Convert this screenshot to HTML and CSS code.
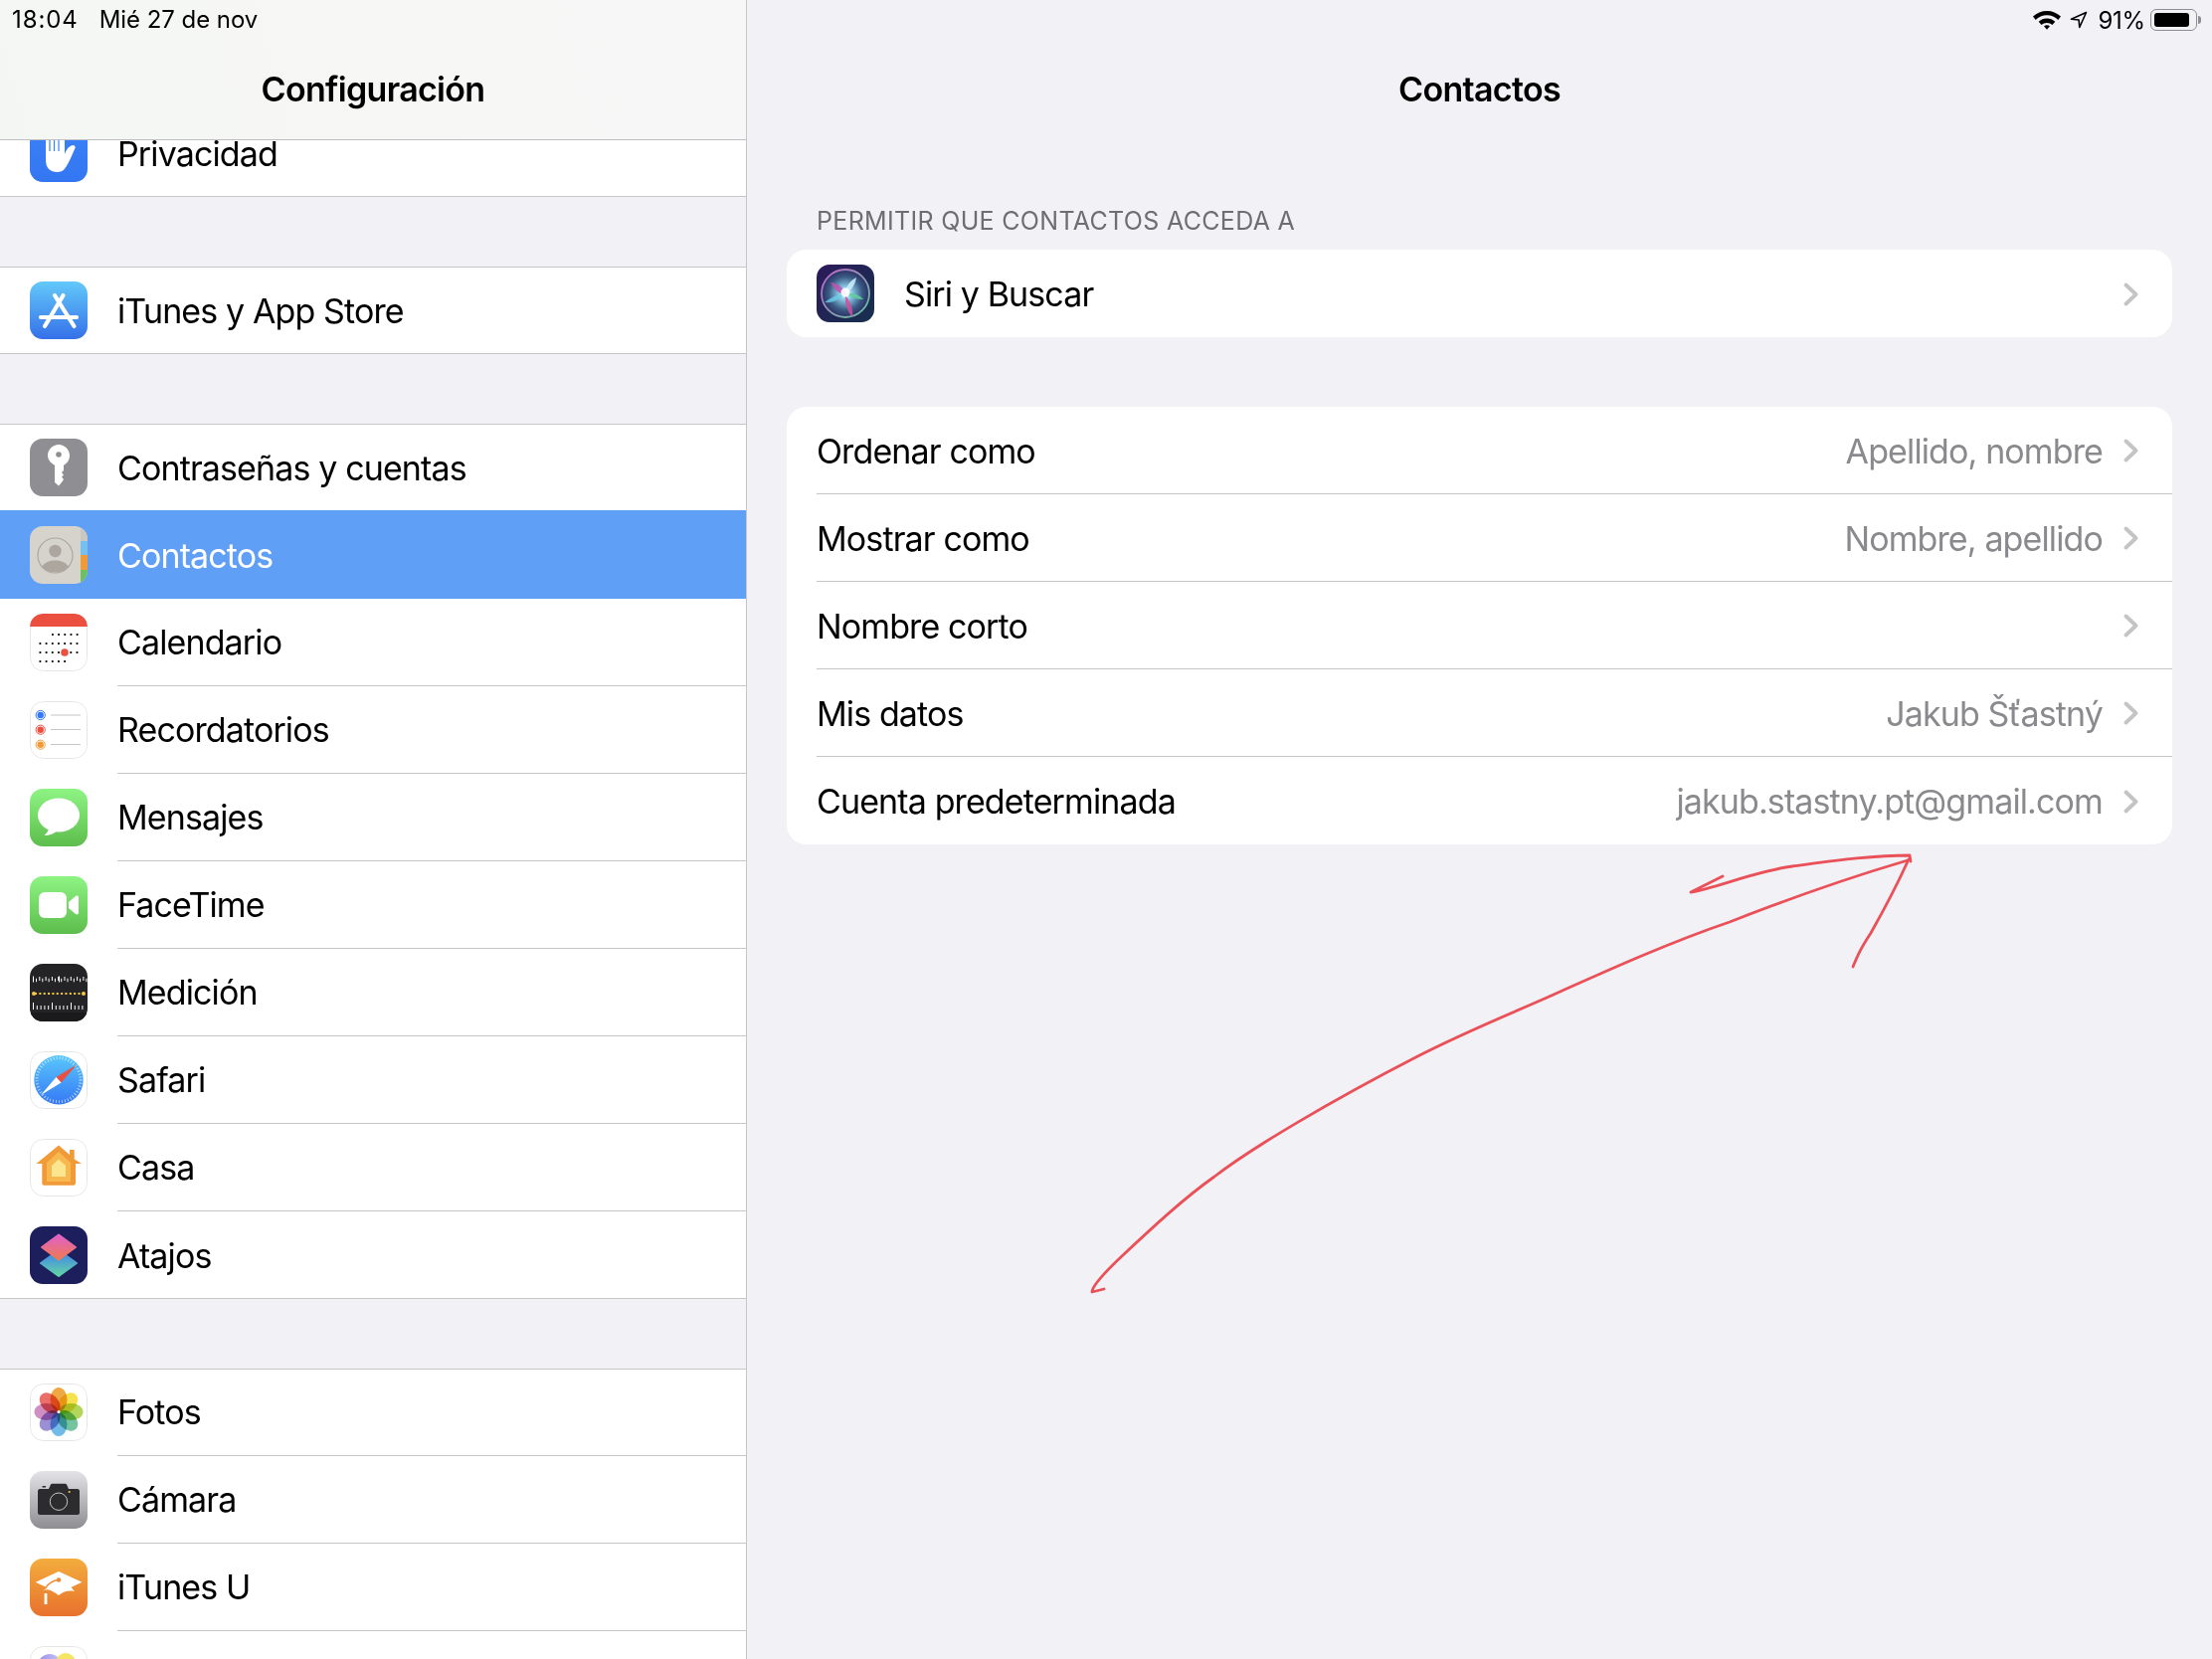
FILE: index.html
```html
<!DOCTYPE html>
<html lang="es">
<head>
<meta charset="utf-8">
<title>Configuración</title>
<link rel="stylesheet" href="styles.css">
</head>
<body>
<aside class="sidebar">
  <header class="side-head">
    <div class="status status-left"><span class="st-time">18:04</span><span>Mié 27 de nov</span></div>
    <h1 class="title">Configuración</h1>
  </header>
  <div class="list">
    <section class="group group-first">
      <div class="row">
        <svg class="ic" viewBox="0 0 58 58"><defs><linearGradient id="g-pr" x1="0" y1="0" x2="0" y2="1"><stop offset="0" stop-color="#3a82f7"/><stop offset="1" stop-color="#3476f2"/></linearGradient></defs><rect width="58" height="58" fill="url(#g-pr)"/><path d="M16 8h19v22c2-5 4-8 8-9 2 0 3 1 2.500 3-3 6-6 15-10 20-2 3-5 4-8 4-7 0-11.500-4-11.500-12z" fill="#fff"/><path d="M20 0v27M24.500 0v27M29 0v27" stroke="#3a82f7" stroke-width="1.200"/></svg>
        <div class="label">Privacidad</div>
      </div>
    </section>
    <section class="group">
      <div class="row">
        <svg class="ic" viewBox="0 0 58 58"><defs><linearGradient id="g-as" x1="0" y1="0" x2="0" y2="1"><stop offset="0" stop-color="#63c9f9"/><stop offset="1" stop-color="#3570e9"/></linearGradient></defs><rect width="58" height="58" fill="url(#g-as)"/><g stroke="#fff" stroke-width="4.200" stroke-linecap="round" fill="none"><path d="M25 14l19.500 31"/><path d="M33.500 14 15 45"/><path d="M11 36h36"/></g></svg>
        <div class="label">iTunes y App Store</div>
      </div>
    </section>
    <section class="group">
      <div class="row">
        <svg class="ic" viewBox="0 0 58 58"><rect width="58" height="58" fill="#8e8e93"/><path d="M29 6c6 0 11 5 11 11 0 4.500-2.500 8-6 9.700v5.300l-2 2 2 2.500-2 2 2 2.500-2 3-3 3.500-4-3.500V26.700c-3.500-1.700-7-5.200-7-9.700 0-6 5-11 11-11z" fill="#fff"/><circle cx="29" cy="16" r="2.800" fill="#8e8e93"/></svg>
        <div class="label">Contraseñas y cuentas</div>
      </div>
      <div class="row row-active">
        <svg class="ic" viewBox="0 0 58 58"><rect width="58" height="58" fill="#d5d3cb"/><rect x="51" width="7" height="15" fill="#c9c7bf"/><rect x="51" y="15" width="7" height="14" fill="#74c1f1"/><rect x="51" y="29" width="7" height="15" fill="#f09a38"/><rect x="51" y="44" width="7" height="14" fill="#6cc161"/><circle cx="25.500" cy="29.500" r="17.500" fill="none" stroke="#aca69e" stroke-width="1.200"/><circle cx="25.500" cy="25" r="6.200" fill="#aca69e"/><path d="M12 41c3-5 8-6.500 13.500-6.500S36 36 39 41c-3 3.500-8 5.300-13.500 5.300S15 44.500 12 41z" fill="#aca69e"/></svg>
        <div class="label">Contactos</div>
      </div>
      <div class="row">
        <svg class="ic" viewBox="0 0 58 58"><rect x=".5" y=".5" width="57" height="57" rx="13" fill="#fff" stroke="#e6e6e6"/><path d="M0 13V13a13 13 0 0 1 13-13h32a13 13 0 0 1 13 13z" fill="#ea4f40"/><g stroke="#111" stroke-width="1.800" stroke-dasharray="1.800 4.380" fill="none"><path d="M22 21h27"/><path d="M9.500 30h39"/><path d="M9.500 39h39"/><path d="M9.500 48h27"/></g><circle cx="35" cy="39" r="3.800" fill="#ea4f40"/></svg>
        <div class="label">Calendario</div>
      </div>
      <div class="row">
        <svg class="ic" viewBox="0 0 58 58"><rect x=".5" y=".5" width="57" height="57" rx="13" fill="#fff" stroke="#e6e6e6"/><g fill="none" stroke-width="1"><circle cx="10.700" cy="14" r="4.600" stroke="#3478f6"/><circle cx="10.700" cy="28.700" r="4.600" stroke="#ea4f40"/><circle cx="10.700" cy="43.700" r="4.600" stroke="#f09a38"/></g><circle cx="10.700" cy="14" r="3.200" fill="#3478f6"/><circle cx="10.700" cy="28.700" r="3.200" fill="#ea4f40"/><circle cx="10.700" cy="43.700" r="3.200" fill="#f09a38"/><path d="M21 14h30M21 28.500h30M21 43.500h30" stroke="#c6c6c8" stroke-width="1"/></svg>
        <div class="label">Recordatorios</div>
      </div>
      <div class="row">
        <svg class="ic" viewBox="0 0 58 58"><defs><linearGradient id="g-ms" x1="0" y1="0" x2="0" y2="1"><stop offset="0" stop-color="#8df483"/><stop offset="1" stop-color="#5dbd4c"/></linearGradient></defs><rect width="58" height="58" fill="url(#g-ms)"/><ellipse cx="29" cy="26.500" rx="21" ry="17" fill="#fff"/><path d="M20 38c-1 4-3 7-5.500 9 5 0 9-1.500 12-4z" fill="#fff"/></svg>
        <div class="label">Mensajes</div>
      </div>
      <div class="row">
        <svg class="ic" viewBox="0 0 58 58"><defs><linearGradient id="g-ft" x1="0" y1="0" x2="0" y2="1"><stop offset="0" stop-color="#8df483"/><stop offset="1" stop-color="#5dbd4c"/></linearGradient></defs><rect width="58" height="58" fill="url(#g-ft)"/><rect x="9" y="16" width="28" height="26" rx="6" fill="#fff"/><path d="M39 26l7-6c1.500-1 3-.5 3 1.500v15c0 2-1.500 2.500-3 1.500l-7-6z" fill="#fff"/></svg>
        <div class="label">FaceTime</div>
      </div>
      <div class="row">
        <svg class="ic" viewBox="0 0 58 58"><rect width="58" height="58" fill="#242426"/><rect y="49" width="58" height="9" fill="#1a1a1c"/><path d="M3 15h52" stroke="#fff" stroke-width="4" stroke-dasharray="1 5.300" fill="none"/><path d="M3 15.500h52" stroke="#fff" stroke-width="6" stroke-dasharray="1 25" fill="none"/><path d="M6 16.500h52" stroke="#fff" stroke-width="3.500" stroke-dasharray="1 5.300" fill="none"/><path d="M3 44h52" stroke="#fff" stroke-width="4" stroke-dasharray="1 2.800" fill="none"/><path d="M3 42.500h52" stroke="#fff" stroke-width="7" stroke-dasharray="1 18" fill="none"/><path d="M5 30h48" stroke="#f6c944" stroke-width="2.200" stroke-dasharray="2 2.350" fill="none"/><circle cx="4" cy="30" r="2" fill="#f6c944"/><circle cx="54" cy="30" r="2" fill="#f6c944"/></svg>
        <div class="label">Medición</div>
      </div>
      <div class="row">
        <svg class="ic" viewBox="0 0 58 58"><defs><linearGradient id="g-sf" x1="0" y1="0" x2="0" y2="1"><stop offset="0" stop-color="#5ac8fa"/><stop offset="1" stop-color="#3478f6"/></linearGradient></defs><rect x=".5" y=".5" width="57" height="57" rx="13" fill="#fff" stroke="#e6e6e6"/><circle cx="29" cy="28.700" r="24.700" fill="url(#g-sf)"/><circle cx="29" cy="28.700" r="22" fill="none" stroke="#fff" stroke-opacity=".75" stroke-width="3" stroke-dasharray=".8 2.250"/><path d="M47 13.500 26.500 26l5 5.500z" fill="#ea4f40"/><path d="M11 44l15.500-18 5 5.500z" fill="#fff"/></svg>
        <div class="label">Safari</div>
      </div>
      <div class="row">
        <svg class="ic" viewBox="0 0 58 58"><rect x=".5" y=".5" width="57" height="57" rx="13" fill="#fff" stroke="#e6e6e6"/><path d="M29 6.500 40 16v-5h4.700v9.500L52 25H46v19.500c0 1.300-.8 2.200-2 2.200H14.300c-1.200 0-2-.9-2-2.200V25H6.500z" fill="#f09a38"/><path d="M29 13 41 24v19H17V24z" fill="#f7b84f"/><path d="M29 20.500 36 27v11H22V27z" fill="#fbe58e"/></svg>
        <div class="label">Casa</div>
      </div>
      <div class="row">
        <svg class="ic" viewBox="0 0 58 58"><defs><linearGradient id="g-sa" x1="0" y1="0" x2="0" y2="1"><stop offset="0" stop-color="#e060cc"/><stop offset="1" stop-color="#ee7a4e"/></linearGradient><linearGradient id="g-sb" x1="0" y1="0" x2="0" y2="1"><stop offset="0" stop-color="#3f7cf0"/><stop offset="1" stop-color="#62d6a4"/></linearGradient></defs><rect width="58" height="58" fill="#1c1f5c"/><path d="M11 37 29 50 47 37 29 24z" fill="url(#g-sb)" stroke="url(#g-sb)" stroke-width="2" stroke-linejoin="round"/><path d="M12 21 29 8.500 46 21 29 33.500z" fill="url(#g-sa)" stroke="url(#g-sa)" stroke-width="2" stroke-linejoin="round"/></svg>
        <div class="label">Atajos</div>
      </div>
    </section>
    <section class="group">
      <div class="row">
        <svg class="ic" viewBox="0 0 58 58"><rect x=".5" y=".5" width="57" height="57" rx="13" fill="#fff" stroke="#e6e6e6"/><g class="petals"><ellipse cx="29" cy="16" rx="8.500" ry="12" fill="#f0a843"/><ellipse cx="29" cy="16" rx="8.500" ry="12" fill="#f5e24e" transform="rotate(45 29 28.500)"/><ellipse cx="29" cy="16" rx="8.500" ry="12" fill="#b2d65a" transform="rotate(90 29 28.500)"/><ellipse cx="29" cy="16" rx="8.500" ry="12" fill="#74c4a0" transform="rotate(135 29 28.500)"/><ellipse cx="29" cy="16" rx="8.500" ry="12" fill="#72bbe8" transform="rotate(180 29 28.500)"/><ellipse cx="29" cy="16" rx="8.500" ry="12" fill="#9c8fd4" transform="rotate(225 29 28.500)"/><ellipse cx="29" cy="16" rx="8.500" ry="12" fill="#d08fc2" transform="rotate(270 29 28.500)"/><ellipse cx="29" cy="16" rx="8.500" ry="12" fill="#ea6f6a" transform="rotate(315 29 28.500)"/></g><circle cx="29" cy="28.500" r="1.500" fill="#fff"/></svg>
        <div class="label">Fotos</div>
      </div>
      <div class="row">
        <svg class="ic" viewBox="0 0 58 58"><defs><linearGradient id="g-cm" x1="0" y1="0" x2="0" y2="1"><stop offset="0" stop-color="#e4e4e7"/><stop offset="1" stop-color="#8d8d92"/></linearGradient></defs><rect width="58" height="58" fill="url(#g-cm)"/><path d="M10 18h9l2-4.500c.3-.5.700-.7 1.300-.7h13.400c.6 0 1 .2 1.300.7l2 4.500h9c1 0 2 1 2 2v22c0 1-1 2-2 2H10c-1 0-2-1-2-2V20c0-1 1-2 2-2z" fill="#2c2c2e"/><rect x="12.500" y="15" width="3.500" height="1.500" fill="#2c2c2e"/><circle cx="29" cy="30.700" r="8.700" fill="none" stroke="#c4c4c6" stroke-width="1"/><circle cx="39.700" cy="21" r="1.100" fill="#f6c944"/></svg>
        <div class="label">Cámara</div>
      </div>
      <div class="row">
        <svg class="ic" viewBox="0 0 58 58"><defs><linearGradient id="g-iu" x1="0" y1="0" x2="0" y2="1"><stop offset="0" stop-color="#f3ad3d"/><stop offset="1" stop-color="#e8712c"/></linearGradient></defs><rect width="58" height="58" fill="url(#g-iu)"/><path d="M29 13 52.500 23.700 29 34.700 5.700 23.700z" fill="#fff"/><path d="M13 32.500c5-3 10 0 16 4.500 4-3.500 9-5.500 16-4l-5-6-11 5-9-4.500z" fill="#fff"/><path d="M15.500 30c3-5 8-8 13.500-8.500" fill="none" stroke="#ee8a33" stroke-width="1.400"/><circle cx="29" cy="21.500" r="2.200" fill="#ee8a33"/><rect x="14.600" y="35" width="2.800" height="11" fill="#fff"/></svg>
        <div class="label">iTunes U</div>
      </div>
      <div class="row">
        <svg class="ic" viewBox="0 0 58 58"><defs><linearGradient id="g-gc" x1="0" y1="0" x2="1" y2="0"><stop offset="0" stop-color="#9b8cf0"/><stop offset="1" stop-color="#c8c8f4"/></linearGradient></defs><rect x=".5" y=".5" width="57" height="57" rx="13" fill="#fff" stroke="#e6e6e6"/><circle cx="20" cy="20" r="12" fill="url(#g-gc)"/><circle cx="36" cy="17" r="10" fill="#f5e04a" fill-opacity=".85"/><circle cx="20" cy="40" r="11" fill="#f08a8a"/><circle cx="38" cy="37" r="13" fill="#6fd27a"/></svg>
        <div class="label"></div>
      </div>
    </section>
  </div>
</aside>
<main class="detail">
  <header class="detail-head">
    <div class="status status-right">
      <svg class="st-wifi" viewBox="0 0 28 20"><path d="M14 1c5.500 0 10 2 14 5.600L25.300 10C22.300 7.100 18.500 5.300 14 5.300S5.700 7.100 2.700 10L0 6.600C4 3 8.500 1 14 1z" fill="#000"/><path d="M14 8.500c3.300 0 6 1.200 8.300 3.300l-2.800 3.100c-1.500-1.300-3.300-2-5.500-2s-4 .7-5.500 2l-2.800-3.100C8 9.700 10.700 8.500 14 8.500z" fill="#000"/><path d="M14 15.200c1.100 0 2.100.4 3 1.100L14 19.800l-3-3.500c.9-.7 1.900-1.100 3-1.100z" fill="#000"/></svg>
      <svg class="st-loc" viewBox="0 0 18 18"><path d="M16.500 1.500 1.500 8.300l7.600.7.700 7.500z" fill="none" stroke="#000" stroke-width="1.600" stroke-linejoin="round"/></svg>
      <span class="st-pct">91%</span>
      <span class="battery"><span class="battery-fill"></span></span>
      <span class="battery-nub"></span>
    </div>
    <h1 class="title">Contactos</h1>
  </header>
  <div class="detail-body">
    <div class="section-label">PERMITIR QUE CONTACTOS ACCEDA A</div>
    <section class="card">
      <div class="cell cell-siri">
        <svg class="ic" viewBox="0 0 58 58"><defs><linearGradient id="g-si" x1="0" y1="0" x2="1" y2="1"><stop offset="0" stop-color="#2c1a5a"/><stop offset="1" stop-color="#16304e"/></linearGradient><radialGradient id="g-so"><stop offset="0" stop-color="#fff"/><stop offset=".25" stop-color="#8fd0e8"/><stop offset=".7" stop-color="#3a5a84"/><stop offset="1" stop-color="#2a2f62"/></radialGradient><linearGradient id="g-sr" x1="0" y1="0" x2="1" y2="1"><stop offset="0" stop-color="#c061c8"/><stop offset="1" stop-color="#5fc8a0"/></linearGradient></defs><rect width="58" height="58" fill="url(#g-si)"/><circle cx="29" cy="29" r="24" fill="url(#g-so)" stroke="url(#g-sr)" stroke-width="1.800"/><path d="M14 18c8 1 14 6 17 13-8-1-14-6-17-13z" fill="#c24fb0" fill-opacity=".8"/><path d="M36 53c-5-6-8-14-7-22 5 6 8 14 7 22z" fill="#d04fa0" fill-opacity=".85"/><path d="M47 35c-7 0-13-2-18-6 7-1 14 1 18 6z" fill="#5fcf9c" fill-opacity=".85"/><path d="M40 13c-1 7-5 13-11 16 0-7 5-13 11-16z" fill="#d0f0ff" fill-opacity=".85"/><path d="M8 38c6-5 13-8 21-9-5 6-13 10-21 9z" fill="#6ad0e8" fill-opacity=".8"/><circle cx="29" cy="28" r="4.500" fill="#fff" fill-opacity=".9"/></svg>
        <div class="cell-text"><span class="cell-name">Siri y Buscar</span>
          <svg class="chev" viewBox="0 0 15 24"><path d="M2.500 2.500 12.500 12 2.500 21.500"/></svg>
        </div>
      </div>
    </section>
    <section class="card">
      <div class="cell">
        <div class="cell-text"><span class="cell-name">Ordenar como</span><span class="cell-value">Apellido, nombre</span>
          <svg class="chev" viewBox="0 0 15 24"><path d="M2.500 2.500 12.500 12 2.500 21.500"/></svg>
        </div>
      </div>
      <div class="cell">
        <div class="cell-text"><span class="cell-name">Mostrar como</span><span class="cell-value">Nombre, apellido</span>
          <svg class="chev" viewBox="0 0 15 24"><path d="M2.500 2.500 12.500 12 2.500 21.500"/></svg>
        </div>
      </div>
      <div class="cell">
        <div class="cell-text"><span class="cell-name">Nombre corto</span>
          <svg class="chev" viewBox="0 0 15 24"><path d="M2.500 2.500 12.500 12 2.500 21.500"/></svg>
        </div>
      </div>
      <div class="cell">
        <div class="cell-text"><span class="cell-name">Mis datos</span><span class="cell-value">Jakub Šťastný</span>
          <svg class="chev" viewBox="0 0 15 24"><path d="M2.500 2.500 12.500 12 2.500 21.500"/></svg>
        </div>
      </div>
      <div class="cell">
        <div class="cell-text"><span class="cell-name">Cuenta predeterminada</span><span class="cell-value">jakub.stastny.pt@gmail.com</span>
          <svg class="chev" viewBox="0 0 15 24"><path d="M2.500 2.500 12.500 12 2.500 21.500"/></svg>
        </div>
      </div>
    </section>
  </div>
</main>
<svg class="scribble" viewBox="0 0 2224 1668">
  <path d="M1110 1296 1098 1299C1098 1293 1112 1278 1129 1262C1160 1233 1190 1205 1221 1183C1260 1153 1340 1106 1423.500 1063C1470 1039 1510 1023 1557.500 1002C1620 974 1680 947 1739 927C1800 903 1850 885 1918 865"/>
  <path d="M1732 881 1700 897C1725 893 1765 876 1802 871C1840 866 1880 860 1920 860L1921 866"/>
  <path d="M1919 864C1905 895 1894 915 1881 938C1870 955 1868 960 1863 972"/>
</svg>
</body>
</html>
```

FILE: styles.css
```css
* { box-sizing: border-box; }
html, body { margin: 0; padding: 0; }
body {
  width: 2224px;
  height: 1668px;
  overflow: hidden;
  display: flex;
  position: relative;
  background: #f1f1f6;
  color: #000;
  font-family: Inter, "Liberation Sans", sans-serif;
  font-size: 34px;
  letter-spacing: -0.88px;
}
.sidebar {
  width: 751px;
  flex: none;
  display: flex;
  flex-direction: column;
  height: 1668px;
  border-right: 1px solid #c6c6c8;
}
.side-head {
  height: 141px;
  flex: none;
  background: linear-gradient(75deg, #f3f7f2 0%, #f6f7f5 35%, #f7f7f7 100%);
  border-bottom: 1px solid #bfbfc3;
  display: flex;
  flex-direction: column;
}
.status {
  height: 40px;
  flex: none;
  display: flex;
  align-items: center;
  font-size: 24px;
  letter-spacing: -0.05px;
}
.status-left { padding-left: 12px; gap: 21px; padding-bottom: 2px; }
.st-time { letter-spacing: 0.9px; }
.status-right { justify-content: flex-end; padding-right: 11px; }
.title {
  margin: 0;
  height: 100px;
  padding-bottom: 1px;
  display: flex;
  align-items: center;
  justify-content: center;
  font-size: 34px;
  font-weight: 600;
  letter-spacing: -0.7px;
}
.list {
  flex: 1;
  overflow: hidden;
  background: #f1f1f6;
}
.group {
  background: #fff;
  margin-top: 70px;
  box-shadow: inset 0 1px 0 #c6c6c8, inset 0 -1px 0 #c6c6c8;
}
.group-first { margin-top: -31px; }
.row {
  height: 88px;
  display: flex;
  align-items: center;
  gap: 30px;
  padding-left: 30px;
}
.ic {
  width: 58px;
  height: 58px;
  flex: none;
  display: block;
  border-radius: 13px;
}
.label {
  flex: 1;
  align-self: stretch;
  display: flex;
  align-items: center;
  border-bottom: 1px solid #c6c6c8;
}
.row:last-child .label { border-bottom: 0; }
.row:has(+ .row-active) .label { border-bottom: 0; }
.row-active {
  background: #609ff6;
  box-shadow: 0 -1px 0 #609ff6;
  color: #fff;
}
.row-active .label { border-bottom: 0; }
.petals { isolation: isolate; }
.petals ellipse { mix-blend-mode: multiply; }

.detail {
  flex: 1;
  display: flex;
  flex-direction: column;
  min-width: 0;
}
.detail-head {
  height: 140px;
  flex: none;
  display: flex;
  flex-direction: column;
}
.st-wifi { width: 28px; height: 20px; margin-right: 9px; }
.st-loc { width: 18px; height: 18px; margin-right: 10px; }
.st-pct { margin-right: 5px; letter-spacing: -0.2px; }
.battery {
  width: 47px;
  height: 22px;
  padding: 3px;
  border: 1.500px solid #8e8e93;
  border-radius: 6px;
  display: block;
}
.battery-fill {
  display: block;
  width: 91%;
  height: 100%;
  background: #000;
  border-radius: 3px;
}
.battery-nub {
  width: 3px;
  height: 8px;
  margin-left: 1px;
  background: #8e8e93;
  border-radius: 0 3px 3px 0;
}
.detail-body {
  padding: 0 40px;
  flex: 1;
}
.section-label {
  height: 111px;
  display: flex;
  align-items: flex-end;
  padding: 0 0 14px 30px;
  font-size: 25px;
  letter-spacing: 0.32px;
  color: #6d6d72;
}
.card {
  background: #fff;
  border-radius: 20px;
  margin-bottom: 70px;
}
.cell {
  height: 88px;
  display: flex;
  align-items: center;
  padding-left: 30px;
}
.cell-siri { gap: 30px; }
.cell-text {
  flex: 1;
  min-width: 0;
  align-self: stretch;
  display: flex;
  align-items: center;
  padding-right: 34px;
  padding-top: 1px;
  border-bottom: 1px solid #c6c6c8;
}
.cell:last-child .cell-text { border-bottom: 0; }
.cell-name { flex: 1; }
.cell-value { color: #8a8a8e; margin-right: 21px; }
.chev {
  width: 15px;
  height: 24px;
  flex: none;
  fill: none;
  stroke: #c4c4c7;
  stroke-width: 3.800;
  stroke-linecap: round;
  stroke-linejoin: round;
}
.scribble {
  position: absolute;
  left: 0;
  top: 0;
  width: 2224px;
  height: 1668px;
  fill: none;
  stroke: #ea5058;
  stroke-width: 2.800;
  stroke-linecap: round;
  stroke-linejoin: round;
  pointer-events: none;
}
```
